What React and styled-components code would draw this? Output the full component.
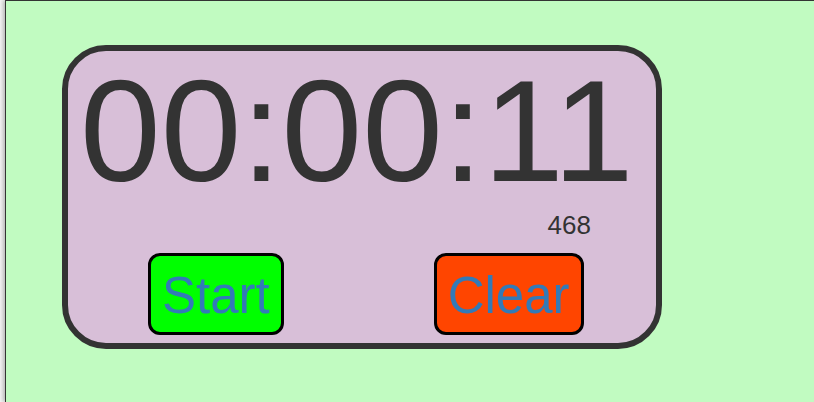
import React from "react";
import styled, { createGlobalStyle } from "styled-components";

const GlobalStyle = createGlobalStyle`
  html, body {
    margin: 0;
    padding: 0;
    background: #f4f4f4;
    overflow: hidden;
  }
  body {
    font-family: "Liberation Sans", Arial, sans-serif;
  }
`

const Page = styled.div`
  margin-left: 5px;
  min-height: 100vh;
  border-left: 1px solid #333;
  border-top: 1px solid #333;
  background: #c1fbc1;
  box-shadow: -2px 0 4px rgba(0, 0, 0, 0.25);
  padding: 44px 0 0 56px;
  box-sizing: border-box;
`
const Card = styled.div`
  width: 600px;
  height: 304px;
  box-sizing: border-box;
  border: 6px solid #333;
  border-radius: 44px;
  background: #d8bfd8;
  display: flex;
  flex-direction: column;
`
const Time = styled.div`
  color: #333;
  font-size: 145px;
  line-height: 145px;
  margin-top: 8px;
  padding-left: 12px;
  white-space: nowrap;
`
const Millis = styled.div`
  color: #333;
  font-size: 26px;
  line-height: 26px;
  margin-top: 8px;
  text-align: right;
  padding-right: 65px;
`
const Controls = styled.div`
  display: flex;
  align-items: flex-start;
  gap: 150px;
  margin-top: 15px;
  padding-left: 80px;
`
const Button = styled.button`
  font-family: "Liberation Sans", Arial, sans-serif;
  font-size: 51px;
  line-height: normal;
  color: #337ab7;
  background: ${props => props.bg};
  border: 3px solid #000;
  border-radius: 12px;
  padding: 10px 11px 7px;
  cursor: pointer;
`

const App = () => {
  return (
    <>
      <GlobalStyle />
      <Page>
        <Card>
          <Time>00:00:11</Time>
          <Millis>468</Millis>
          <Controls>
            <Button bg="#00ff00">Start</Button>
            <Button bg="#ff4500">Clear</Button>
          </Controls>
        </Card>
      </Page>
    </>
  );
};

export default App;
